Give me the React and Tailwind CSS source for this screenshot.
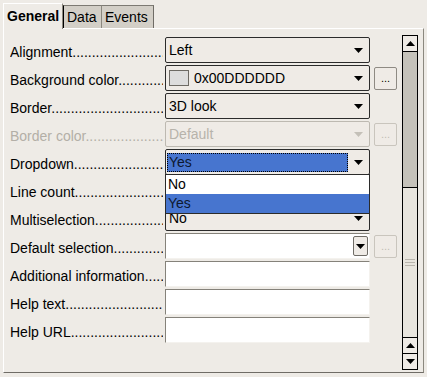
import React from 'react';

const FONT = { fontFamily: '"Liberation Sans", Arial, sans-serif' };
const DOTS = '.'.repeat(60);

// small black triangle used by listboxes and scroll buttons
function Tri({ up, disabled }) {
    return (
        <svg width="9" height="5" viewBox="0 0 9 5" className="block">
            <polygon
                points={up ? '0,5 9,5 4.5,0' : '0,0 9,0 4.5,5'}
                fill={disabled ? '#c4c0b8' : '#000'}
            />
        </svg>
    );
}

function ListBox({ children, disabled }) {
    return (
        <div
            className={`flex h-[26px] w-[205px] items-center rounded-[2px] border bg-[#efebe6] pl-[3px] pr-[6px] ${
                disabled ? 'border-[#bdb9b1] text-[#b7b3ab]' : 'border-[#2b2b2b] text-black'
            }`}
        >
            <div className="flex flex-1 items-center">{children}</div>
            <Tri disabled={disabled} />
        </div>
    );
}

function TextField({ children }) {
    return (
        <div className="relative h-[26px] w-[205px] border-t border-l border-[#85827a] border-r border-b border-r-[#f4f2ee] border-b-[#f4f2ee] bg-white">
            {children}
        </div>
    );
}

function DotsButton({ disabled }) {
    return (
        <div
            className={`flex h-[23px] w-[23px] items-end justify-center rounded-[2px] border pb-[5px] text-[11px] leading-none ${
                disabled ? 'border-[#c9c5bd] text-[#c0bcb4]' : 'border-[#8e8a83] text-black'
            } bg-[#efebe6]`}
        >
            ...
        </div>
    );
}

function Row({ label, disabled, button, children }) {
    return (
        <div className="flex h-[26px] items-center">
            <div
                className={`w-[153px] overflow-hidden whitespace-nowrap pt-[5px] ${
                    disabled ? 'text-[#b3afa7]' : 'text-black'
                }`}
            >
                {label}
                {DOTS}
            </div>
            <div className="ml-[2px]">{children}</div>
            {button && (
                <div className="ml-[4px]">
                    <DotsButton disabled={button === 'disabled'} />
                </div>
            )}
        </div>
    );
}

function ScrollButton({ up }) {
    return (
        <div className="flex h-[15px] items-center justify-center bg-[#efebe6]">
            <Tri up={up} />
        </div>
    );
}

function Scrollbar() {
    return (
        <div className="ml-[5px] flex w-[16px] flex-col border border-black">
            <ScrollButton up />
            <div className="h-[136px] border-t border-black bg-[#c5c2ba]" />
            <div className="flex h-[150px] flex-col items-center justify-center gap-[2px] border-t border-black bg-[#e8e5de]">
                <div className="h-px w-[10px] bg-[#b9b5ad]" />
                <div className="h-px w-[10px] bg-[#b9b5ad]" />
                <div className="h-px w-[10px] bg-[#b9b5ad]" />
            </div>
            <div className="border-t border-black">
                <ScrollButton up />
            </div>
            <div className="border-t border-black">
                <ScrollButton />
            </div>
        </div>
    );
}

function Tabs() {
    return (
        <div className="flex h-[28px] items-end pl-[3px]">
            <div className="-mb-px flex h-[26px] w-[60px] items-center border-t border-l border-white border-r border-r-[#8b887f] bg-[#eeebe6] pl-[3px] text-[14px] font-bold">
                General
            </div>
            <div className="flex h-[23px] w-[39px] items-center border-t border-l border-r border-l-black border-t-[#7d7a73] border-r-[#8b887f] bg-[#d3cfc7] pl-[3px] text-[14px]">
                Data
            </div>
            <div className="flex h-[23px] w-[52px] items-center border-t border-r border-t-[#7d7a73] border-r-[#6f6c66] bg-[#d3cfc7] pl-[3px] text-[14px]">
                Events
            </div>
        </div>
    );
}

export default function App() {
    return (
        <div className="h-[377px] w-[427px] bg-[#eeebe6] text-[14px] text-black" style={FONT}>
            <Tabs />
            <div className="ml-[3px] flex h-[345px] w-[421px] items-start border-t border-l border-white border-r border-b border-r-[#8b887f] border-b-[#6f6c66] pl-[6px] pt-[6px]">
                <div className="flex w-[387px] flex-col gap-[2px] pt-[2px]">
                    <Row label="Alignment">
                        <ListBox>Left</ListBox>
                    </Row>
                    <Row label="Background color" button="on">
                        <ListBox>
                            <div className="mr-[5px] h-[16px] w-[20px] border border-[#6d6a64] bg-[#dddddd]" />
                            0x00DDDDDD
                        </ListBox>
                    </Row>
                    <Row label="Border">
                        <ListBox>3D look</ListBox>
                    </Row>
                    <Row label="Border color" disabled button="disabled">
                        <ListBox disabled>Default</ListBox>
                    </Row>
                    <Row label="Dropdown">
                        <div className="relative">
                            <div className="flex h-[26px] w-[205px] items-center rounded-[2px] border border-[#2b2b2b] bg-[#efebe6] pl-px pr-[6px]">
                                <div className="mr-[6px] flex h-[19px] flex-1 items-center border border-dotted border-black bg-[#4775cf] pl-px text-[#0d1830]">
                                    Yes
                                </div>
                                <Tri />
                            </div>
                            <div className="absolute left-0 top-[25px] z-10 w-[205px] border border-[#2b2b2b] bg-white">
                                <div className="flex h-[19px] items-center pl-[2px]">No</div>
                                <div className="flex h-[19px] items-center bg-[#4775cf] pl-[2px] text-[#0d1830]">Yes</div>
                            </div>
                        </div>
                    </Row>
                    <Row label="Line count">
                        <TextField />
                    </Row>
                    <Row label="Multiselection">
                        <ListBox>No</ListBox>
                    </Row>
                    <Row label="Default selection" button="disabled">
                        <TextField>
                            <div className="absolute right-[1px] top-[2px] flex h-[20px] w-[15px] items-center justify-center rounded-[2px] border border-[#6f6c66] bg-[#efebe6]">
                                <Tri />
                            </div>
                        </TextField>
                    </Row>
                    <Row label="Additional information">
                        <TextField />
                    </Row>
                    <Row label="Help text">
                        <TextField />
                    </Row>
                    <Row label="Help URL">
                        <TextField />
                    </Row>
                </div>
                <Scrollbar />
            </div>
        </div>
    );
}
